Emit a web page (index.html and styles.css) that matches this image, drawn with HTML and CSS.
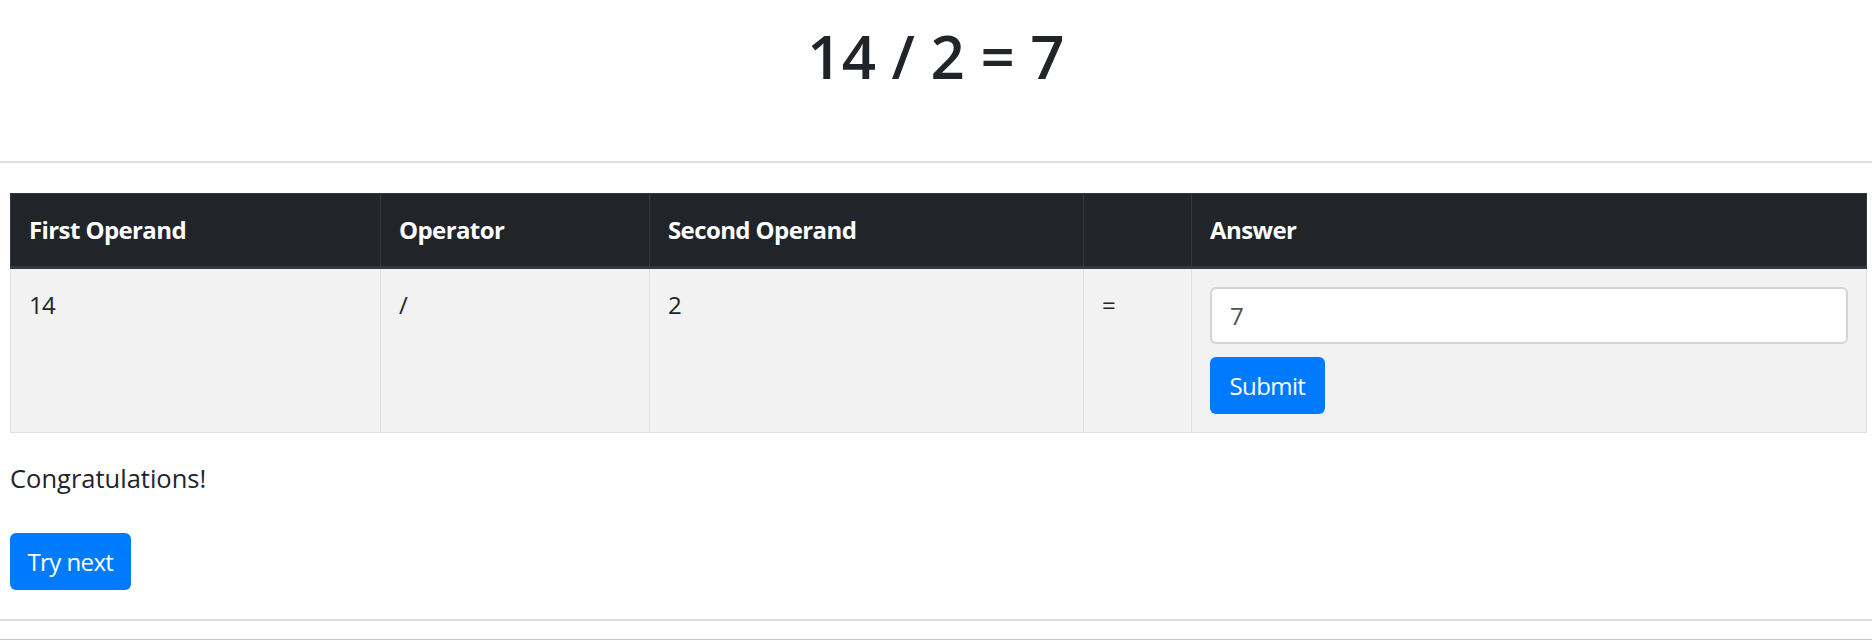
FILE: index.html
```html
<!DOCTYPE html>
<html lang="en">
<head>
<meta charset="utf-8">
<title>Quiz</title>
<link rel="stylesheet" href="styles.css">
</head>
<body>
  <header class="top">
    <h1 class="question">14 / 2 = 7</h1>
  </header>
  <hr class="rule">
  <main class="content">
    <table class="grid">
      <colgroup>
        <col class="c1"><col class="c2"><col class="c3"><col class="c4"><col class="c5">
      </colgroup>
      <thead>
        <tr>
          <th>First Operand</th>
          <th>Operator</th>
          <th>Second Operand</th>
          <th></th>
          <th>Answer</th>
        </tr>
      </thead>
      <tbody>
        <tr>
          <td>14</td>
          <td>/</td>
          <td>2</td>
          <td>=</td>
          <td>
            <input class="answer" type="text" value="7">
            <button class="btn btn-submit" type="button">Submit</button>
          </td>
        </tr>
      </tbody>
    </table>
    <p class="msg">Congratulations!</p>
    <button class="btn btn-next" type="button">Try next</button>
  </main>
  <hr class="rule rule-bottom">
  <div class="footer-line"></div>
</body>
</html>
```
FILE: styles.css
```css
html, body {
  margin: 0;
  padding: 0;
  background: #fff;
}
body {
  font-family: "Open Sans", "Noto Sans", sans-serif;
  color: #212529;
}
.top {
  height: 161px;
  box-sizing: border-box;
  padding-top: 20px;
  display: flex;
  justify-content: center;
}
.question {
  margin: 0;
  font-size: 60px;
  line-height: 72px;
  font-weight: 600;
  color: #212529;
}
.rule {
  margin: 0;
  border: 0;
  border-top: 2px solid #dedede;
  height: 0;
}
.content {
  padding: 30px 5px 0 10px;
}
.grid {
  width: 100%;
  table-layout: fixed;
  border-collapse: collapse;
  font-size: 24px;
  line-height: 36px;
  letter-spacing: -0.6px;
}
.c1 { width: 370px; }
.c2 { width: 269px; }
.c3 { width: 434px; }
.c4 { width: 108px; }
.grid th {
  padding: 18px;
  text-align: left;
  vertical-align: bottom;
  background: #212529;
  color: #fff;
  font-weight: 700;
  border: 1px solid #32383e;
  border-bottom: 3px solid #32383e;
}
.grid td {
  padding: 18px;
  vertical-align: top;
  background: #f2f2f2;
  border: 1px solid #dee2e6;
  color: #212529;
}
.answer {
  display: block;
  width: 100%;
  box-sizing: border-box;
  height: 57px;
  margin: 0;
  padding: 9px 18px;
  border: 2px solid #ced4da;
  border-radius: 6px;
  background: #fff;
  font-family: inherit;
  font-size: 24px;
  letter-spacing: -0.6px;
  color: #495057;
}
.btn {
  display: inline-block;
  height: 57px;
  border: 0;
  border-radius: 6px;
  background: #007bff;
  color: #fff;
  font-family: inherit;
  font-size: 24px;
  line-height: 36px;
  letter-spacing: -0.6px;
  cursor: pointer;
}
.btn-submit {
  margin-top: 13px;
  padding: 0 19.5px;
}
.msg {
  margin: 27px 0 0;
  font-size: 25.5px;
  line-height: 36px;
}
.btn-next {
  margin-top: 37px;
  padding: 0 17.5px;
}
.rule-bottom {
  margin-top: 29px;
}
.footer-line {
  margin-top: 18px;
  border-top: 1px solid #c8c8c8;
}
```
